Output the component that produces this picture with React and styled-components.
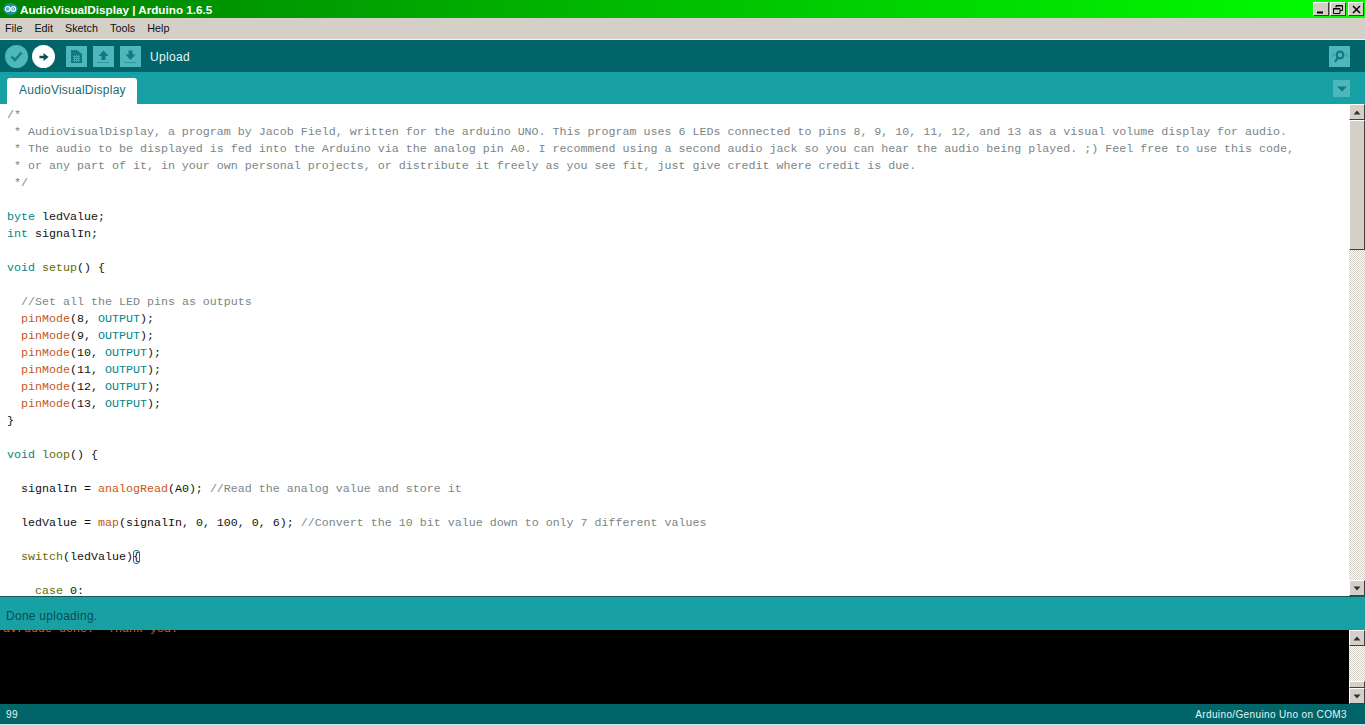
import React from 'react';
import styled, { createGlobalStyle } from 'styled-components';

const GlobalStyle = createGlobalStyle`
  html, body { margin: 0; padding: 0; background: #d4d0c8; overflow: hidden; }
  * { box-sizing: border-box; }
`;

const Window = styled.div`
  width: 1365px;
  height: 725px;
  display: flex;
  flex-direction: column;
  font-family: "Liberation Sans", Arial, sans-serif;
`;

const TitleBar = styled.div`
  height: 18px;
  flex: none;
  display: flex;
  align-items: center;
  padding: 0 1px 0 3px;
  background: linear-gradient(90deg, #008000 0%, #00ff00 100%);
`;

const TitleText = styled.span`
  margin: 1px 0 0 2px;
  font-family: "Liberation Sans", Arial, sans-serif;
  font-weight: 700;
  font-size: 11.7px;
  letter-spacing: 0;
  color: #fff;
  flex: 1;
`;

const CaptionButtons = styled.div`
  display: flex;
  align-items: center;
`;

const CaptionButton = styled.div`
  width: 16px;
  height: 14px;
  margin-left: ${p => p.$gap}px;
  background: #d4d0c8;
  border-top: 1px solid #fff;
  border-left: 1px solid #fff;
  border-right: 1px solid #404040;
  border-bottom: 1px solid #404040;
  display: flex;
  align-items: center;
  justify-content: center;
`;

const MenuBar = styled.div`
  height: 22px;
  flex: none;
  display: flex;
  align-items: center;
  padding: 0 0 2px 5px;
  gap: 12px;
  background: #d4d0c8;
  border-bottom: 1px solid #f4f4f0;
`;

const MenuItem = styled.span`
  font-size: 10.8px;
  color: #111;
`;

const Toolbar = styled.div`
  height: 32px;
  flex: none;
  display: flex;
  align-items: center;
  padding: 1px 15px 0 5px;
  background: #006468;
`;

const RoundButton = styled.div`
  width: 23px;
  height: 23px;
  margin-right: 4px;
  border-radius: 50%;
  background: ${p => (p.$active ? '#fff' : '#4db7bb')};
  display: flex;
  align-items: center;
  justify-content: center;
`;

const SquareButton = styled.div`
  width: 21px;
  height: 21px;
  margin-left: ${p => p.$gap}px;
  background: #4db7bb;
  display: flex;
  align-items: center;
  justify-content: center;
`;

const ToolLabel = styled.span`
  margin-left: 9px;
  flex: 1;
  font-size: 12px;
  letter-spacing: 0.35px;
  color: #e8f6f6;
`;

const TabBar = styled.div`
  height: 32px;
  flex: none;
  display: flex;
  align-items: flex-end;
  justify-content: space-between;
  padding: 0 15px 0 7px;
  background: #17a1a5;
`;

const Tab = styled.div`
  width: 130px;
  height: 26px;
  padding: 5px 0 0 12px;
  background: #fff;
  border-radius: 3px 3px 0 0;
  font-size: 12px;
  letter-spacing: 0.24px;
  color: #1b6a73;
`;

const TabMenu = styled.div`
  width: 17px;
  height: 17px;
  margin-bottom: 7px;
  background: #4db7bb;
  display: flex;
  align-items: center;
  justify-content: center;
`;

const EditorArea = styled.div`
  flex: none;
  height: 493px;
  display: flex;
  background: #fff;
  border-bottom: 1px solid #14585c;
`;

const CodePane = styled.pre`
  flex: 1;
  margin: 0;
  padding: 3px 0 0 7px;
  overflow: hidden;
  font-family: "Liberation Mono", "Courier New", monospace;
  font-size: 11.67px;
  line-height: 17px;
  color: #111;
`;

const Tok = styled.span`
  color: ${p => ({ comment: '#7a8687', type: '#00858a', fn: '#c4571a', ctl: '#5e6d03' }[p.$kind])};
`;

const BraceMatch = styled.span`
  outline: 1px solid #00799c;
  outline-offset: -1px;
  border-radius: 3px;
`;

const ScrollTrack = styled.div`
  width: 16px;
  flex: none;
  display: flex;
  flex-direction: column;
  background-color: #f2f0ec;
  background-image: repeating-conic-gradient(#d4d0c8 0% 25%, #ffffff 0% 50%);
  background-size: 2px 2px;
`;

const ScrollArrow = styled.div`
  height: 16px;
  flex: none;
  background: #d4d0c8;
  border-top: 1px solid #fff;
  border-left: 1px solid #fff;
  border-right: 1px solid #404040;
  border-bottom: 1px solid #404040;
  display: flex;
  align-items: center;
  justify-content: center;
`;

const ScrollThumb = styled.div`
  height: ${p => p.$size}px;
  flex: none;
  background: #d4d0c8;
  border-top: 1px solid #fff;
  border-left: 1px solid #fff;
  border-right: 1px solid #404040;
  border-bottom: 1px solid #404040;
`;

const ScrollGap = styled.div`
  flex: 1;
`;

const StatusBar = styled.div`
  height: 33px;
  flex: none;
  padding: 12px 0 0 6px;
  background: #17a1a5;
  font-size: 12px;
  letter-spacing: 0.27px;
  color: #0f4a50;
`;

const ConsoleArea = styled.div`
  height: 74px;
  flex: none;
  display: flex;
  background: #000;
`;

const ConsolePane = styled.pre`
  flex: 1;
  margin: 0;
  padding-left: 3px;
  overflow: hidden;
  font-family: "Liberation Mono", "Courier New", monospace;
  font-size: 11.67px;
  line-height: 17px;
  color: #c9632c;
`;

const ConsoleLine = styled.div`
  margin-top: -9px;
`;

const Footer = styled.div`
  height: 20px;
  flex: none;
  display: flex;
  align-items: center;
  justify-content: space-between;
  padding: 0 18px 0 6px;
  background: #006468;
  font-size: 10px;
  letter-spacing: 0.37px;
  color: #e4f4f4;
`;

const BottomEdge = styled.div`
  height: 1px;
  flex: none;
  background: #cfe4e4;
`;

const ArrowUp = () => (
  <svg width="8" height="5" viewBox="0 0 8 5"><path d="M4 0.5 L7.5 4.5 H0.5 Z" fill="#303030" /></svg>
);

const ArrowDown = () => (
  <svg width="8" height="5" viewBox="0 0 8 5"><path d="M0.5 0.5 H7.5 L4 4.5 Z" fill="#303030" /></svg>
);

const ArduinoLogo = () => (
  <svg width="15" height="12" viewBox="0 0 16 13">
    <ellipse cx="8" cy="6.5" rx="8" ry="6.5" fill="#1b8f9c" />
    <circle cx="5" cy="6.5" r="2.6" fill="none" stroke="#fff" strokeWidth="1.3" />
    <circle cx="11" cy="6.5" r="2.6" fill="none" stroke="#fff" strokeWidth="1.3" />
    <path d="M3.8 6.5 H6.2 M9.8 6.5 H12.2 M11 5.3 V7.7" stroke="#fff" strokeWidth="0.8" />
  </svg>
);

const CheckIcon = () => (
  <svg width="13" height="11" viewBox="0 0 13 11">
    <path d="M1.5 5.5 L5 9 L11.5 1.5" fill="none" stroke="#1c7f85" strokeWidth="2.6" />
  </svg>
);

const ArrowRightIcon = () => (
  <svg width="10" height="10" viewBox="0 0 11 11">
    <path d="M0.5 4 H5 V1 L10.5 5.5 L5 10 V7 H0.5 Z" fill="#0b4f53" />
  </svg>
);

const NewIcon = () => (
  <svg width="11" height="13" viewBox="0 0 11 13">
    <path d="M0 0 H6 L11 4 V13 H0 Z" fill="#0f7a80" />
    <path d="M2 6.5 H9 M2 8.5 H9 M2 10.5 H9 M3.5 5 V12 M5.5 5 V12 M7.5 5 V12" stroke="#4db7bb" strokeWidth="0.7" />
  </svg>
);

const OpenIcon = () => (
  <svg width="13" height="14" viewBox="0 0 13 14">
    <path d="M6.5 0.5 L11.5 6 H8.5 V10 H4.5 V6 H1.5 Z" fill="#0f7a80" />
    <path d="M0.5 12.5 H12.5" stroke="#0f7a80" strokeWidth="1" strokeDasharray="1 1" />
  </svg>
);

const SaveIcon = () => (
  <svg width="13" height="14" viewBox="0 0 13 14">
    <path d="M4.5 0.5 H8.5 V4.5 H11.5 L6.5 10 L1.5 4.5 H4.5 Z" fill="#0f7a80" />
    <path d="M0.5 12.5 H12.5" stroke="#0f7a80" strokeWidth="1" strokeDasharray="1 1" />
  </svg>
);

const MonitorIcon = () => (
  <svg width="19" height="13" viewBox="0 0 19 13">
    <circle cx="10" cy="5" r="3.4" fill="none" stroke="#0f7a80" strokeWidth="2.2" />
    <path d="M7.5 8 L5 12" stroke="#0f7a80" strokeWidth="2.2" />
    <path d="M2 6 H3 M3 4 H4 M16 4 H17 M17 6 H18" stroke="#0f7a80" strokeWidth="1" />
  </svg>
);

const TabMenuIcon = () => (
  <svg width="10" height="6" viewBox="0 0 10 6"><path d="M0 0.5 H10 L5 5.5 Z" fill="#0f7a80" /></svg>
);

const MENUS = ['File', 'Edit', 'Sketch', 'Tools', 'Help'];

const App = () => (
  <Window>
    <GlobalStyle />
    <TitleBar>
      <ArduinoLogo />
      <TitleText>AudioVisualDisplay | Arduino 1.6.5</TitleText>
      <CaptionButtons>
        <CaptionButton $gap={0}>
          <svg width="8" height="9" viewBox="0 0 8 9"><path d="M0 7.5 H6" stroke="#000" strokeWidth="2" /></svg>
        </CaptionButton>
        <CaptionButton $gap={1}>
          <svg width="10" height="9" viewBox="0 0 10 9">
            <path d="M3 2.5 V0.5 H9.5 V5.5 H7 M3 1 H9.5" fill="none" stroke="#000" />
            <path d="M0.5 3.5 H7 V8.5 H0.5 Z M0.5 4 H7" fill="none" stroke="#000" />
          </svg>
        </CaptionButton>
        <CaptionButton $gap={2}>
          <svg width="9" height="9" viewBox="0 0 9 9"><path d="M1 1 L8 8 M8 1 L1 8" stroke="#000" strokeWidth="1.5" /></svg>
        </CaptionButton>
      </CaptionButtons>
    </TitleBar>

    <MenuBar>
      {MENUS.map(m => <MenuItem key={m}>{m}</MenuItem>)}
    </MenuBar>

    <Toolbar>
      <RoundButton><CheckIcon /></RoundButton>
      <RoundButton $active><ArrowRightIcon /></RoundButton>
      <SquareButton $gap={7}><NewIcon /></SquareButton>
      <SquareButton $gap={6}><OpenIcon /></SquareButton>
      <SquareButton $gap={6}><SaveIcon /></SquareButton>
      <ToolLabel>Upload</ToolLabel>
      <SquareButton $gap={0}><MonitorIcon /></SquareButton>
    </Toolbar>

    <TabBar>
      <Tab>AudioVisualDisplay</Tab>
      <TabMenu><TabMenuIcon /></TabMenu>
    </TabBar>

    <EditorArea>
      <CodePane>
        <Tok $kind="comment">{`/*
 * AudioVisualDisplay, a program by Jacob Field, written for the arduino UNO. This program uses 6 LEDs connected to pins 8, 9, 10, 11, 12, and 13 as a visual volume display for audio.
 * The audio to be displayed is fed into the Arduino via the analog pin A0. I recommend using a second audio jack so you can hear the audio being played. ;) Feel free to use this code,
 * or any part of it, in your own personal projects, or distribute it freely as you see fit, just give credit where credit is due.
 */`}</Tok>
        {`

`}
        <Tok $kind="type">byte</Tok>{` ledValue;
`}
        <Tok $kind="type">int</Tok>{` signalIn;

`}
        <Tok $kind="type">void</Tok> <Tok $kind="ctl">setup</Tok>{`() {

  `}
        <Tok $kind="comment">//Set all the LED pins as outputs</Tok>
        {[8, 9, 10, 11, 12, 13].map(pin => (
          <React.Fragment key={pin}>
            {`
  `}
            <Tok $kind="fn">pinMode</Tok>({pin}, <Tok $kind="type">OUTPUT</Tok>);
          </React.Fragment>
        ))}
        {`
}

`}
        <Tok $kind="type">void</Tok> <Tok $kind="ctl">loop</Tok>{`() {

  signalIn = `}
        <Tok $kind="fn">analogRead</Tok>(A0); <Tok $kind="comment">//Read the analog value and store it</Tok>
        {`

  ledValue = `}
        <Tok $kind="fn">map</Tok>(signalIn, 0, 100, 0, 6); <Tok $kind="comment">//Convert the 10 bit value down to only 7 different values</Tok>
        {`

  `}
        <Tok $kind="ctl">switch</Tok>(ledValue)<BraceMatch>{'{'}</BraceMatch>
        {`

    `}
        <Tok $kind="ctl">case</Tok>{` 0:`}
      </CodePane>
      <ScrollTrack>
        <ScrollArrow><ArrowUp /></ScrollArrow>
        <ScrollThumb $size={130} />
        <ScrollGap />
        <ScrollArrow><ArrowDown /></ScrollArrow>
      </ScrollTrack>
    </EditorArea>

    <StatusBar>Done uploading.</StatusBar>

    <ConsoleArea>
      <ConsolePane>
        <ConsoleLine>avrdude done.  Thank you.</ConsoleLine>
      </ConsolePane>
      <ScrollTrack>
        <ScrollArrow><ArrowUp /></ScrollArrow>
        <ScrollGap />
        <ScrollThumb $size={7} />
        <ScrollArrow><ArrowDown /></ScrollArrow>
      </ScrollTrack>
    </ConsoleArea>

    <Footer>
      <span>99</span>
      <span>Arduino/Genuino Uno on COM3</span>
    </Footer>
    <BottomEdge />
  </Window>
);

export default App;
